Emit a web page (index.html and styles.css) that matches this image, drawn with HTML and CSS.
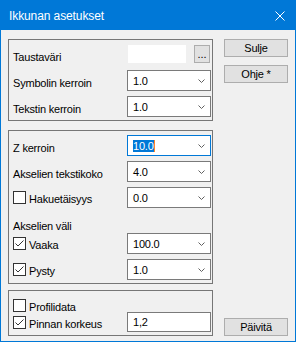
FILE: index.html
```html
<!DOCTYPE html>
<html>
<head>
<meta charset="utf-8">
<link rel="stylesheet" href="styles.css">
</head>
<body>
<div class="window">
  <div class="titlebar">
    <span class="title">Ikkunan asetukset</span>
    <svg class="close" width="10" height="10" viewBox="0 0 10 10"><path d="M0.5 0.5 L9.5 9.5 M9.5 0.5 L0.5 9.5" stroke="#fff" stroke-width="1" fill="none"/></svg>
  </div>
  <div class="client">
    <div class="left">
      <div class="group g1">
        <div class="row row-swatch">
          <span class="label">Taustaväri</span>
          <div class="picker"><div class="swatch"></div><div class="btn dots">...</div></div>
        </div>
        <div class="row gap7">
          <span class="label">Symbolin kerroin</span>
          <div class="combo"><span class="val">1.0</span><svg class="chev" width="7" height="4" viewBox="0 0 7 4"><polyline points="0.5,0.5 3.5,3.5 6.5,0.5" fill="none" stroke="#606060" stroke-width="1"/></svg></div>
        </div>
        <div class="row gap5">
          <span class="label">Tekstin kerroin</span>
          <div class="combo"><span class="val">1.0</span><svg class="chev" width="7" height="4" viewBox="0 0 7 4"><polyline points="0.5,0.5 3.5,3.5 6.5,0.5" fill="none" stroke="#606060" stroke-width="1"/></svg></div>
        </div>
      </div>

      <div class="group g2">
        <div class="row">
          <span class="label">Z kerroin</span>
          <div class="combo focus"><span class="val"><span class="sel">10.0</span></span><svg class="chev" width="7" height="4" viewBox="0 0 7 4"><polyline points="0.5,0.5 3.5,3.5 6.5,0.5" fill="none" stroke="#606060" stroke-width="1"/></svg></div>
        </div>
        <div class="row gap5">
          <span class="label">Akselien tekstikoko</span>
          <div class="combo"><span class="val">4.0</span><svg class="chev" width="7" height="4" viewBox="0 0 7 4"><polyline points="0.5,0.5 3.5,3.5 6.5,0.5" fill="none" stroke="#606060" stroke-width="1"/></svg></div>
        </div>
        <div class="row gap5">
          <span class="check"><span class="box"></span><span class="ctext">Hakuetäisyys</span></span>
          <div class="combo"><span class="val">0.0</span><svg class="chev" width="7" height="4" viewBox="0 0 7 4"><polyline points="0.5,0.5 3.5,3.5 6.5,0.5" fill="none" stroke="#606060" stroke-width="1"/></svg></div>
        </div>
        <div class="sub">Akselien väli</div>
        <div class="row">
          <span class="check"><span class="box"><svg width="11" height="11" viewBox="0 0 11 11"><polyline points="1.5,5.5 4,8 9.5,2.5" fill="none" stroke="#333" stroke-width="1"/></svg></span><span class="ctext">Vaaka</span></span>
          <div class="combo"><span class="val">100.0</span><svg class="chev" width="7" height="4" viewBox="0 0 7 4"><polyline points="0.5,0.5 3.5,3.5 6.5,0.5" fill="none" stroke="#606060" stroke-width="1"/></svg></div>
        </div>
        <div class="row gap5">
          <span class="check"><span class="box"><svg width="11" height="11" viewBox="0 0 11 11"><polyline points="1.5,5.5 4,8 9.5,2.5" fill="none" stroke="#333" stroke-width="1"/></svg></span><span class="ctext">Pysty</span></span>
          <div class="combo"><span class="val">1.0</span><svg class="chev" width="7" height="4" viewBox="0 0 7 4"><polyline points="0.5,0.5 3.5,3.5 6.5,0.5" fill="none" stroke="#606060" stroke-width="1"/></svg></div>
        </div>
      </div>

      <div class="group g3">
        <div class="row row-check">
          <span class="check"><span class="box"></span><span class="ctext">Profilidata</span></span>
        </div>
        <div class="row row-input">
          <span class="check"><span class="box"><svg width="11" height="11" viewBox="0 0 11 11"><polyline points="1.5,5.5 4,8 9.5,2.5" fill="none" stroke="#333" stroke-width="1"/></svg></span><span class="ctext">Pinnan korkeus</span></span>
          <div class="textbox">1,2</div>
        </div>
      </div>
    </div>

    <div class="right">
      <div class="btn push">Sulje</div>
      <div class="btn push second">Ohje *</div>
      <div class="btn push bottom">Päivitä</div>
    </div>
  </div>
</div>
</body>
</html>
```

FILE: styles.css
```css
* { box-sizing: border-box; }

body {
  margin: 0;
  font-family: "Liberation Sans", Arial, sans-serif;
  font-size: 11px;
  letter-spacing: -0.2px;
  color: #000;
}

.window {
  width: 296px;
  height: 342px;
  border: 1px solid #0078d7;
  background: #f0f0f0;
  display: flex;
  flex-direction: column;
}

.titlebar {
  height: 29px;
  flex: none;
  background: #0078d7;
  color: #fff;
  display: flex;
  align-items: center;
  padding-left: 8px;
  font-size: 12px;
  letter-spacing: -0.1px;
}

.close {
  margin-left: auto;
  margin-right: 10px;
}

.client {
  flex: 1;
  display: flex;
  gap: 11px;
  padding: 9px 7px 5px 7px;
}

.left {
  width: 205px;
  display: flex;
  flex-direction: column;
}

.right {
  width: 64px;
  display: flex;
  flex-direction: column;
}

.group {
  border: 1px solid #767676;
  padding: 0 1px 3px 4px;
}

.g1 { padding-top: 5px; }
.g2 { margin-top: 9px; padding-top: 4px; }
.g3 { margin-top: 6px; padding-top: 8px; }

.row {
  display: flex;
  align-items: center;
  justify-content: space-between;
  height: 21px;
}

.gap5 { margin-top: 5px; }
.gap7 { margin-top: 7px; }

.row-swatch { height: 18px; }
.row-check { height: 13px; }
.row-input { height: 20px; }

.label { padding-top: 5px; }

.picker {
  width: 84px;
  height: 18px;
  display: flex;
}

.swatch {
  width: 58px;
  height: 18px;
  margin-left: 1px;
  background: #fff;
}

.btn {
  border: 1px solid #adadad;
  background: #e1e1e1;
  display: flex;
  align-items: center;
  justify-content: center;
}

.dots {
  width: 16px;
  height: 18px;
  margin-left: 8px;
  letter-spacing: 0;
}

.combo {
  width: 84px;
  height: 21px;
  border: 1px solid #7a7a7a;
  background: #fff;
  display: flex;
  align-items: center;
  padding-left: 5px;
}

.combo.focus { border-color: #0078d7; }

.val { line-height: 12px; }

.sel {
  display: inline-block;
  background: #0078d7;
  color: #fff;
  line-height: 12px;
  border-right: 1px solid #ff8728;
}

.chev {
  margin-left: auto;
  margin-right: 5px;
}

.check {
  display: flex;
  align-items: center;
}

.box {
  width: 13px;
  height: 13px;
  border: 1px solid #333;
  background: #fff;
  margin-right: 3px;
  display: flex;
}

.ctext { padding-top: 3px; }

.sub {
  height: 25px;
  display: flex;
  align-items: flex-end;
  line-height: 13px;
}

.textbox {
  width: 84px;
  height: 20px;
  border: 1px solid #7a7a7a;
  background: #fff;
  display: flex;
  align-items: center;
  padding-left: 5px;
}

.push {
  height: 18px;
}

.second { margin-top: 8px; }
.bottom { margin-top: auto; }
```
